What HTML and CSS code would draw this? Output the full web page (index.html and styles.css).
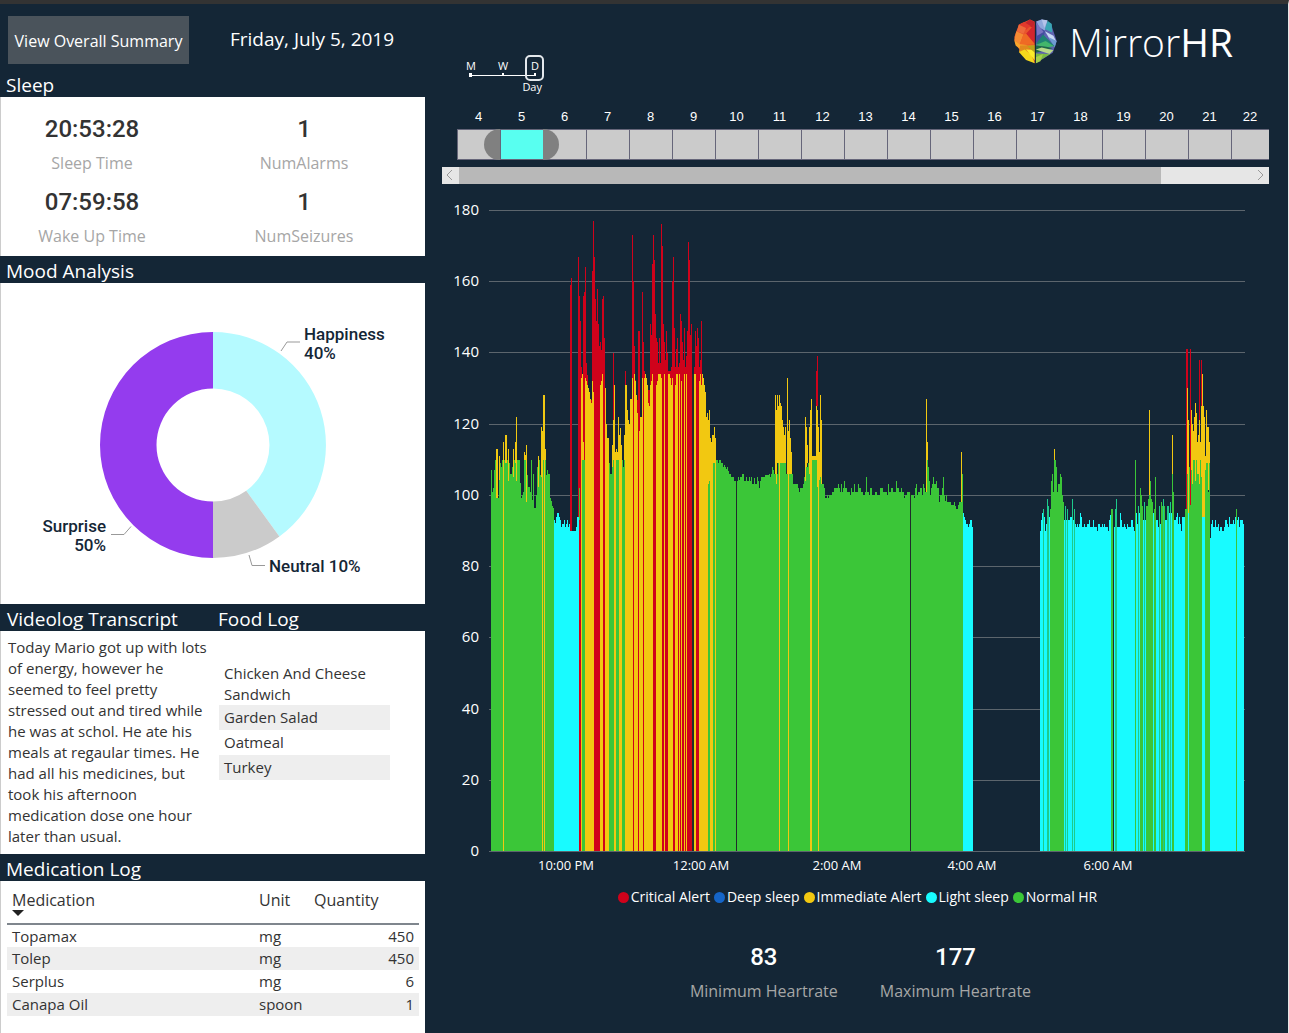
FILE: index.html
```html
<!DOCTYPE html>
<html lang="en">
<head>
<meta charset="utf-8">
<title>MirrorHR</title>
<link rel="stylesheet" href="styles.css">
</head>
<body>
<div class="page">
  <aside class="side">
    <header class="topbar">
      <button class="summary-btn" type="button">View Overall Summary</button>
      <p class="date">Friday, July 5, 2019</p>
    </header>

    <section>
      <h2 class="heading">Sleep</h2>
      <div class="panel sleep">
        <div class="card"><b>20:53:28</b><span>Sleep Time</span></div>
        <div class="card"><b>1</b><span>NumAlarms</span></div>
        <div class="card"><b>07:59:58</b><span>Wake Up Time</span></div>
        <div class="card"><b>1</b><span>NumSeizures</span></div>
      </div>
    </section>

    <section>
      <h2 class="heading">Mood Analysis</h2>
      <div class="panel">
        <svg class="donut" viewBox="1 283 424 321" role="img" aria-label="Mood shares">
          <path fill="#b5faff" d="M213 332A113 113 0 0 1 279.400 536.400L246.200 490.700A56.500 56.500 0 0 0 213 388.500Z"/>
          <path fill="#cbcbcb" d="M279.400 536.400A113 113 0 0 1 213 558L213 501.500A56.500 56.500 0 0 0 246.200 490.700Z"/>
          <path fill="#943cee" d="M213 558A113 113 0 0 1 213 332L213 388.500A56.500 56.500 0 0 0 213 501.500Z"/>
          <g class="leader"><path d="M281 351l6-9h13"/><path d="M111 534.500h13l7-8"/><path d="M249 555l3 10.500h13"/></g>
          <g class="mood-label">
            <text x="304" y="340">Happiness</text><text x="304" y="359">40%</text>
            <text x="106" y="532" text-anchor="end">Surprise</text><text x="106" y="551" text-anchor="end">50%</text>
            <text x="269" y="572">Neutral 10%</text>
          </g>
        </svg>
      </div>
    </section>

    <section class="logs">
      <h2 class="heading">Videolog Transcript</h2>
      <h2 class="heading">Food Log</h2>
      <p class="transcript">Today Mario got up with lots of energy, however he seemed to feel pretty stressed out and tired while he was at schol. He ate his meals at regaular times. He had all his medicines, but took his afternoon medication dose one hour later than usual.</p>
      <ul class="food">
        <li>Chicken And Cheese Sandwich</li>
        <li>Garden Salad</li>
        <li>Oatmeal</li>
        <li>Turkey</li>
      </ul>
    </section>

    <section class="meds-section">
      <h2 class="heading">Medication Log</h2>
      <div class="panel meds-panel">
        <table class="meds">
          <thead><tr><th class="sorted">Medication</th><th>Unit</th><th>Quantity</th></tr></thead>
          <tbody>
            <tr><td>Topamax</td><td>mg</td><td>450</td></tr>
            <tr><td>Tolep</td><td>mg</td><td>450</td></tr>
            <tr><td>Serplus</td><td>mg</td><td>6</td></tr>
            <tr><td>Canapa Oil</td><td>spoon</td><td>1</td></tr>
          </tbody>
        </table>
      </div>
    </section>
  </aside>

  <main class="main">
    <header class="main-head">
      <div class="grain">
        <div class="grain-row"><button type="button">M</button><button type="button">W</button><button type="button" class="on">D</button></div>
        <svg class="grain-line" viewBox="0 0 96 4" aria-hidden="true"><path fill="#fff" d="M14 2h67v1h-67zM14 0h3v4h-3zM47 0h2v3h-2zM79 0h2v3h-2z"/></svg>
        <span class="grain-name">Day</span>
      </div>
      <div class="brand">
        <svg class="brain" viewBox="47 58 132 135" aria-hidden="true">
          <path fill="#e8552d" d="M96 58L62 73L48 112L50 130L82 178L111 192V65Z"/>
          <path fill="#c4242c" d="M96 58L78 70L106 84L111 66Z"/>
          <path fill="#e23a2c" d="M78 66L62 74L84 90L98 78Z"/>
          <path fill="#ee6a3b" d="M62 74L56 94L76 102L84 84Z"/>
          <path fill="#d4262d" d="M111 72L84 102L111 134Z"/>
          <path fill="#f58b33" d="M54 94L48 122L64 136L76 104Z"/>
          <path fill="#ef6a24" d="M76 104L64 136L111 134L84 102Z"/>
          <path fill="#f9a62b" d="M48 122L52 138L70 152L88 136L64 134Z"/>
          <path fill="#e08a1e" d="M66 138L62 158L82 156L111 136Z"/>
          <path fill="#f5d91c" d="M62 158L84 182L111 192L100 166L80 150Z"/>
          <path fill="#fbec2a" d="M84 150L111 184V150Z"/>
          <path fill="#b8a21b" d="M88 140L111 160V136Z"/>
          <path fill="#5e62b0" d="M114 64L132 58L160 70L178 124L166 160L114 192Z"/>
          <path fill="#8fa8dc" d="M132 58L116 64L126 84L142 92L150 62Z"/>
          <path fill="#b4c3ea" d="M132 58L150 60L140 84Z"/>
          <path fill="#39a5b4" d="M150 62L142 88L164 98L163 72Z"/>
          <path fill="#444f9f" d="M114 74L142 94L136 122L114 130Z"/>
          <path fill="#7a75c2" d="M116 68L138 96L118 108Z"/>
          <path fill="#c8d8f3" d="M142 94L168 108L177 126L158 120Z"/>
          <path fill="#6f9bd1" d="M152 112L178 124L172 144Z"/>
          <path fill="#1f8374" d="M136 104L114 134L140 132L172 140Z"/>
          <path fill="#42b66b" d="M114 136L144 124L170 140L148 144Z"/>
          <path fill="#1c6a45" d="M114 138L146 142L166 146L114 160Z"/>
          <path fill="#b8d98a" d="M114 150L132 144L168 152L156 164Z"/>
          <path fill="#78b843" d="M114 162L158 164L114 192Z"/>
          <path fill="#a6d04a" d="M114 174L136 164L128 186L114 192Z"/>
          <path fill="#142636" d="M111 60h3v132h-3z"/>
        </svg>
        <span class="brand-name">Mirror<span>HR</span></span>
      </div>
    </header>

    <div class="timeline">
      <div class="days" id="days"></div>
    </div>
    <div class="scroller">
      <button type="button" aria-label="Earlier"><svg viewBox="0 0 17 17"><path d="M10 3L5 8L10 13"/></svg></button>
      <div class="track"><div class="thumb"></div></div>
      <button type="button" aria-label="Later"><svg viewBox="0 0 17 17"><path d="M6 3L11 8L6 13"/></svg></button>
    </div>

    <svg class="chart" id="chart" viewBox="442 190 827 690" role="img" aria-label="Heart rate through the night"></svg>

    <ul class="legend">
      <li class="critical">Critical Alert</li>
      <li class="deep">Deep sleep</li>
      <li class="immediate">Immediate Alert</li>
      <li class="light">Light sleep</li>
      <li class="normal">Normal HR</li>
    </ul>

    <div class="rates">
      <div class="card"><b>83</b><span>Minimum Heartrate</span></div>
      <div class="card"><b>177</b><span>Maximum Heartrate</span></div>
    </div>
  </main>
</div>
<script src="chart.js"></script>
</body>
</html>
```

FILE: styles.css
```css
*, *::before, *::after { box-sizing: border-box; }

body {
  margin: 0;
  background: #142636;
  color: #fff;
  font-family: "Open Sans", "Noto Sans", sans-serif;
  font-size: 15px;
  line-height: 21px;
}

h2, p, ul { margin: 0; padding: 0; font-weight: 400; }
ul { list-style: none; }
svg { display: block; }
button { border: 0; padding: 0; color: inherit; font: inherit; background: none; }

.page {
  display: grid;
  grid-template-columns: 426px minmax(0, 1fr);
  min-height: 100vh;
  border-top: 4px solid #333;
  border-right: 1px solid #e6e6e6;
}

/* Left column */
.side { display: flex; flex-direction: column; }

.topbar { display: flex; align-items: flex-start; gap: 41px; height: 66px; padding: 12px 8px 0; }
.summary-btn { width: 181px; height: 48px; padding-top: 2px; background: #4a535b; font-size: 16px; white-space: nowrap; }
.date { font-size: 19px; line-height: 46px; white-space: nowrap; }

.heading { height: 27px; padding: 2px 0 0 6px; font-size: 19px; line-height: 27px; }
.panel { margin-right: 1px; border-left: 1px solid #ccc; background: #fff; color: #333; }

.sleep { display: grid; grid-template-columns: 182px 242px; height: 159px; padding-top: 16px; align-content: start; }
.card { display: flex; flex-direction: column; align-items: center; height: 73px; }
.card b { font: 500 24px/32px Roboto, sans-serif; }
.card span { color: #a6a6a6; font-size: 16px; line-height: 36px; }

.donut { width: 100%; }
.leader { fill: none; stroke: #999; }
.mood-label { fill: #142636; font: 500 17px Roboto, sans-serif; }

.logs { display: grid; grid-template-columns: 212px minmax(0, 1fr); }
.logs .heading { padding-left: 7px; }
.logs .heading + .heading { padding-left: 6px; }
.transcript { height: 223px; padding: 6px 2px 0 7px; border-left: 1px solid #ccc; background: #fff; color: #333; }
.food { margin-right: 1px; padding: 30px 35px 0 7px; background: #fff; color: #333; }
.food li { padding: 2px 5px; }
.food li:first-child { padding-bottom: 0; }
.food li:nth-child(even) { background: #eee; }

.meds-section { display: flex; flex: 1; flex-direction: column; }
.meds-panel { flex: 1; padding: 6px 6px 14px; }
.meds { width: 100%; border-collapse: collapse; table-layout: fixed; }
.meds th { height: 37px; padding: 3px 5px 0; border-bottom: 2px solid #7f868d; font-size: 16px; font-weight: 400; text-align: left; vertical-align: top; }
.meds th:nth-child(1) { width: 247px; }
.meds th:nth-child(2) { width: 55px; }
.meds td { height: 23px; padding: 0 5px; }
.meds td:nth-child(3) { text-align: right; }
.meds tbody tr:nth-child(even) { background: #eee; }
.sorted::after { content: ""; display: block; width: 0; margin-top: -1px; border: 6px solid transparent; border-top-color: #222; border-bottom: 0; }

/* Right column */
.main { padding: 0 19px 0 16px; }

.main-head { display: flex; justify-content: space-between; height: 101px; }
.grain { width: 96px; margin: 51px 0 0 13px; font-size: 11px; line-height: 14px; }
.grain-row { display: grid; grid-template-columns: repeat(3, 32px); position: relative; height: 18px; padding-top: 4px; }
.grain-row .on::after { content: ""; position: absolute; top: 0; right: 7px; width: 19px; height: 26px; border: 2px solid #e4e8ec; border-radius: 5px; }
.grain-line { width: 100%; }
.grain-name { display: block; margin-top: 3px; padding-right: 9px; text-align: right; }

.brand { display: flex; align-items: center; gap: 12px; height: 45px; margin: 15px 36px 0 0; }
.brain { width: 43px; height: 45px; }
.brand-name { font-size: 39px; font-weight: 300; line-height: 45px; }
.brand-name span { font-weight: 400; }

.timeline { padding-left: 15px; }
.days { display: flex; font: 13px/24px "Liberation Sans", sans-serif; text-align: center; }
.day { position: relative; flex: 43 1 0; min-width: 0; }
.day:last-child { flex-grow: 38; }
.day i { display: block; height: 31px; border: 1px solid #66667a; border-width: 1px 0 1px 1px; background: #cbcbcb; }
.day.selected i { background: #58fff0; }
.day.selected::before, .day.selected::after { content: ""; position: absolute; bottom: 0; width: 16px; height: 31px; background: #808080; }
.day.selected::before { right: 100%; border-radius: 16px 0 0 16px; }
.day.selected::after { left: 100%; z-index: 1; border-radius: 0 16px 16px 0; }

.scroller { display: flex; height: 17px; margin-top: 7px; background: #e6e6e6; }
.scroller button { width: 17px; }
.scroller path { fill: none; stroke: #999; }
.track { flex: 1; }
.thumb { width: 88.5%; height: 100%; background: #b8b8b8; }

.chart { width: 100%; margin-top: 6px; }
.chart .grid { stroke: #5c656d; }
.chart text { fill: #fff; }
.chart .y-label { font-size: 15px; text-anchor: end; }
.chart .x-label { font-size: 13px; text-anchor: middle; }
.chart .red { fill: #d0021b; }
.chart .yellow { fill: #f2c811; }
.chart .green { fill: #3bc638; }
.chart .cyan { fill: #18fbff; }
.chart .mixed { fill: #1dcb8c; }
.chart .gap { fill: #202c2c; }

.legend { display: flex; justify-content: center; gap: 4px; padding: 7px 0 0 4px; font-size: 14px; line-height: 20px; }
.legend li { display: flex; align-items: center; gap: 2px; white-space: nowrap; }
.legend li::before { content: ""; width: 11px; height: 11px; border-radius: 50%; background: currentColor; }
.legend .critical::before { background: #d0021b; }
.legend .deep::before { background: #1565c8; }
.legend .immediate::before { background: #f2c811; }
.legend .light::before { background: #18fbff; }
.legend .normal::before { background: #3bc638; }

.rates { display: flex; justify-content: center; gap: 42px; padding: 34px 0 0 10px; }
```

FILE: chart.js
```js
// Day strip: 4 to 22, with the fifth selected.
var days = document.getElementById('days');
for (var d = 4; d <= 22; d++) {
  var cell = document.createElement('div');
  cell.className = 'day' + (d === 5 ? ' selected' : '');
  cell.textContent = d;
  cell.appendChild(document.createElement('i'));
  days.appendChild(cell);
}

var BASE = 851;
var out = [];

// A stepped area: pairs of "x:top", closed at "end", down to the given floor.
function area(cls, steps, end, floor) {
  floor = floor || BASE;
  var pts = steps.trim().split(/\s+/).map(function (s) { return s.split(':').map(Number); });
  var path = 'M' + pts[0][0] + ' ' + floor;
  pts.forEach(function (p, i) {
    var next = i + 1 < pts.length ? pts[i + 1][0] : end;
    path += 'V' + p[1] + 'H' + next;
  });
  out.push('<path class="' + cls + '" d="' + path + 'V' + floor + 'Z"/>');
}

// Separate columns: "x,width,top,floor".
function bars(cls, list) {
  var path = list.trim().split(/\s+/).map(function (s) {
    var b = s.split(',').map(Number);
    return 'M' + b[0] + ' ' + b[2] + 'h' + b[1] + 'V' + (b[3] || BASE) + 'h-' + b[1] + 'Z';
  }).join('');
  out.push('<path class="' + cls + '" d="' + path + '"/>');
}

for (var v = 0; v <= 180; v += 20) {
  var y = Math.round(BASE - v * 3.561);
  out.push('<path class="grid" d="M489 ' + (y + 0.5) + 'H1245"/>');
  out.push('<text class="y-label" x="479" y="' + (y + 5) + '">' + v + '</text>');
}
['10:00 PM', '12:00 AM', '2:00 AM', '4:00 AM', '6:00 AM'].forEach(function (t, i) {
  out.push('<text class="x-label" x="' + Math.round(565.5 + i * 135.5) + '" y="870">' + t + '</text>');
});

// Evening: normal heart rate, then light sleep
area('green', '491:470 492:492 493:488 494:470 495:460 497:498 499:480 500:463 501:467 502:460 508:474 509:463 510:474 512:467 513:460 520:483 521:498 522:495 523:492 524:460 527:475 528:487 530:492 531:460 532:500 533:474 534:508 536:495 537:467 539:460 540:475 542:460 546:475 547:470 548:474 550:498 551:501 552:506 553:508', 554);
bars('yellow', '496,2,449,498 499,1,456,480 503,1,442 505,2,435,463 508,1,449,481 513,1,449,477 515,1,442,463 516,1,417,481 524,1,452,460 525,1,455,460 526,1,445,502 538,1,456,487 541,1,427,477 542,1,431 543,1,395,460 544,1,395 545,1,449,460');
area('cyan', '554:520 555:523 556:517 557:513 559:517 560:520 561:527 562:524 564:520 565:527 566:524 567:520 568:527 569:524 570:531 573:531 576:527 577:517 578:520', 580);
bars('red', '570,1,285,531 571,1,278,531');

// Alerts before and after midnight
area('red', '578:257 579:296 580:321 581:367 582:378 583:296 584:292 585:267 586:363 587:375 588:400 592:271 593:221 594:257 595:299 596:321 597:289 598:324 599:346 600:342 601:350 602:299 603:296 604:338 605:388', 606);
bars('red', '613,1,353 625,1,371');
area('red', '632:235 633:281 634:346 635:380 636:400 638:331 640:417 642:292 643:342 644:371 645:390 650:324 651:335 652:264 653:235 654:260 655:314 656:338 657:342 658:363 659:338 660:363 661:224 662:246 663:324 664:342 665:360 666:331 667:353 668:371 671:367 672:281 673:257 674:328 675:367 676:349 677:338 678:367 679:363 680:314 681:321 682:342 683:360 684:328 685:367 686:356 687:331 688:242 689:260 690:335 691:324 692:374 694:367 695:331 696:346 697:328 698:338 699:367 700:360 701:321', 702);
bars('cyan', '578,1,517');
bars('green', '579,1,488,520');
bars('yellow', '581,1,378 582,1,374,460 583,1,442,460 584,1,463');
area('yellow', '585:378 586:381 587:385 588:388 589:392 590:399 591:403 592:381 593:392', 594);
area('yellow', '600:385 601:381 602:374', 603);
area('yellow', '605:388 606:424 607:438 609:463 610:474 612:445 613:420 614:385 615:452 616:449 617:452 618:417 619:435 620:428 621:445 622:460 623:467 624:435 625:385 627:410 628:420 629:424 630:399 632:378', 633);
area('yellow', '634:374 635:381 636:395 637:413', 638);
area('yellow', '639:431 640:417 642:378', 643);
area('yellow', '644:378 645:374 646:378 647:385 648:403 649:406 650:385 651:381 652:374', 653);
area('yellow', '656:385 657:381 658:374 661:378', 662);
bars('yellow', '664,1,374');
area('yellow', '668:374 670:378 671:385 672:378', 673);
bars('yellow', '675,1,385 676,2,374 679,1,374 681,1,381 684,1,374 686,1,374 694,2,374');
area('yellow', '699:381 700:374 701:385 702:374 703:378 704:385 705:392 706:417 707:413 708:420 709:410 710:438 711:442 712:435 714:427 715:438', 716);
area('green', '582:460', 585);
area('green', '609:463 610:474 612:467 613:460', 614);
area('green', '616:460', 619);
area('green', '622:460 623:467 624:460', 625);
bars('green', '708,1,484 709,1,481 713,2,463');
bars('gap', '692,2,374');

// Small hours: steady normal heart rate
area('green', '716:460 718:463 719:460 721:463 723:467 724:465 725:467 726:469 727:467 728:471 729:474 731:477 734:481 738:477 739:480 740:477 742:474 744:481 746:477 747:481 749:477 750:481 751:477 752:484 754:478 755:484 757:477 758:481 759:488 760:481 761:477 765:475 769:474 770:477 771:474 772:467 773:470 774:474 776:484 777:474 778:460 782:463 784:463 786:470 787:474 788:470 790:474 793:484 798:488 799:492 800:488 803:484 804:477 805:481 806:467 808:463 809:460 817:484 818:488 819:480 820:477 822:484 824:488 825:498 827:495 828:498 829:495 832:492 834:488 838:484 839:488 840:492 841:484 842:492 843:488 844:481 845:488 847:492 850:495 851:488 852:492 854:484 855:492 858:484 859:488 861:492 863:495 865:492 866:477 867:492 869:495 870:488 872:495 875:492 877:495 880:488 883:492 887:495 888:484 889:492 891:488 893:492 896:481 897:488 899:492 901:488 902:492 904:498 905:495 907:492 911:495 914:498 915:488 916:484 917:495 918:492 920:488 922:495 923:484 924:488 925:492 926:488 927:460 928:467 929:481 930:495 931:488 932:484 933:477 934:484 936:481 937:488 939:502 940:495 942:488 943:477 944:495 945:501 946:495 947:502 951:505 954:502 955:506 956:509 958:505 959:502 961:499 962:474', 963);
area('yellow', '775:395 776:410 777:395 778:406 779:395 780:403 781:406 782:420 783:427 784:435 785:427', 786, 463);
area('yellow', '787:378 788:431 789:420 790:438 791:452', 792, 474);
bars('yellow', '775,1,460,474 776,1,460,484 779,1,395 788,1,431 805,1,417,481 806,1,427,467 807,1,445,463 809,1,427,474 810,1,410 811,1,399 812,4,456,460 816,1,406,460 817,1,410,487 818,1,427 819,1,452,480 820,1,395,477 821,1,420,484 926,1,399,492 927,1,442,460 961,1,452,502');
bars('red', '816,1,371,406 817,1,356,406');
bars('gap', '736,1,481 910,1,492 786,1,470,474');
area('cyan', '963:513 964:517 965:520 966:524 968:527 969:524 970:520 972:527', 973);

// Morning
bars('red', '1186,2,349,509 1190,1,349,505 1199,1,360,442 1201,1,360,442');
area('yellow', '1187:388 1188:420', 1189, 513);
area('yellow', '1191:410 1192:424 1193:431 1194:417 1195:403 1196:413 1197:442 1198:435 1199:420 1200:442 1201:406 1202:374 1203:406 1204:417 1205:456 1206:410 1207:427 1209:442', 1210, 490);
bars('yellow', '1054,1,449,460 1149,1,410,495 1172,1,435,474 1202,3,480,520');
area('cyan', '1040:531 1041:520 1042:513 1044:517 1045:531 1046:524 1048:520 1049:517 1064:520 1070:517 1072:513 1073:520 1075:524 1076:527 1077:524 1078:527 1079:524 1080:513 1081:517 1082:527 1084:524 1085:527 1087:524 1089:520 1090:527 1093:520 1094:527 1097:531 1098:524 1100:527 1102:524 1103:527 1104:524 1105:527 1108:531 1109:520 1110:515 1112:527 1120:513 1121:520 1122:527 1124:524 1125:527 1126:529 1127:524 1128:527 1131:520 1133:527 1134:531 1136:513 1137:524 1138:513 1140:520 1150:513 1154:520 1158:527 1159:520 1160:524 1161:520 1168:513 1174:520 1176:517 1177:513 1178:524 1179:517 1180:524 1181:531 1182:517 1185:520 1188:513 1202:517 1210:538 1211:524 1212:520 1213:527 1215:520 1216:527 1218:524 1219:531 1220:527 1222:531 1224:527 1225:520 1227:524 1228:527 1229:517 1230:524 1233:520 1234:524 1235:517 1236:520 1238:517 1239:527 1240:520 1243:524', 1244);
bars('mixed', '1043,1,509 1047,1,499 1048,1,506 1065,1,506 1067,1,509 1072,1,499 1074,1,509 1115,1,509 1116,1,499 1138,1,506 1144,1,502 1159,1,506 1163,1,499 1167,2,506 1170,1,502');
area('green', '1050:509 1051:481 1052:474 1053:492 1054:460 1056:467 1057:492 1058:484 1060:474 1061:477 1062:495 1063:502', 1064);
bars('green', '1111,2,509 1135,1,460 1140,1,488 1141,1,495 1142,1,506 1154,1,509 1155,1,477 1161,1,502 1162,1,506 1164,1,506 1172,1,474 1173,1,492 1185,2,509 1187,1,474 1236,1,509');
area('green', '1146:506 1148:499 1149:495 1150:481 1151:499 1152:502', 1153);
area('green', '1189:467 1190:505 1191:470 1192:484 1193:460 1195:481 1196:460 1197:474 1199:484 1200:460 1201:477', 1202);
area('green', '1205:470 1206:463 1208:492 1209:463', 1210);
bars('gap', '1113,1,527');

document.getElementById('chart').innerHTML = out.join('');
```
